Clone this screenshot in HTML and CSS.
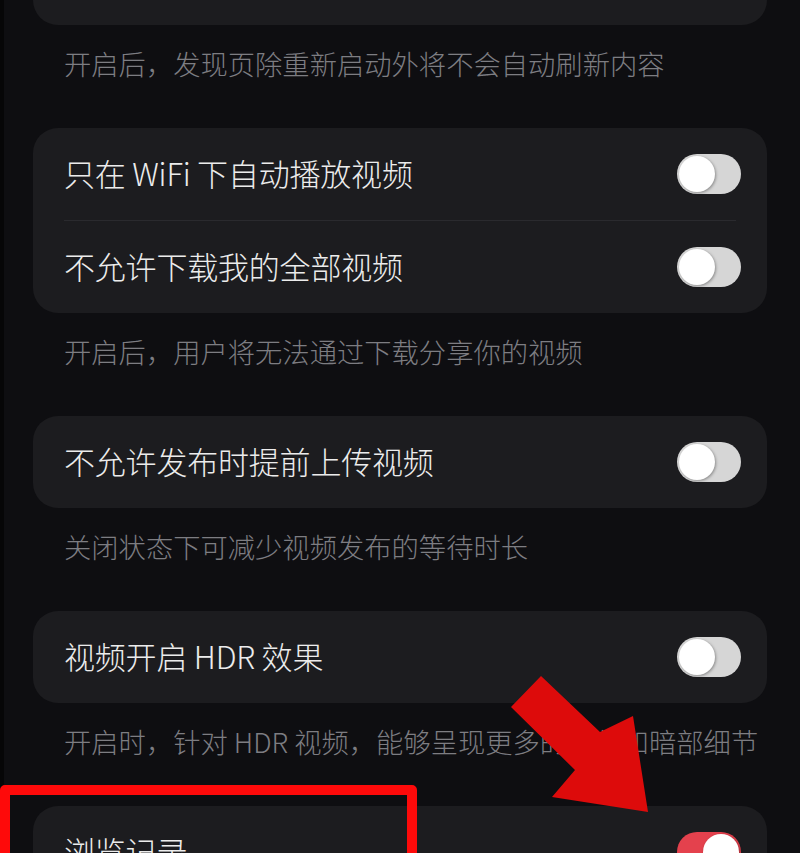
FILE: index.html
```html
<!DOCTYPE html>
<html lang="zh-CN">

<head>
    <meta charset="UTF-8">
    <meta name="viewport" content="width=device-width, initial-scale=1.0">
    <title>通用设置</title>
    <link rel="stylesheet" href="styles.css">
</head>

<body>
    <div class="page">
        <div class="card cut"></div>
        <p class="caption">开启后，发现页除重新启动外将不会自动刷新内容</p>

        <div class="card">
            <div class="row">
                <span class="label">只在 WiFi 下自动播放视频</span>
                <span class="toggle"></span>
            </div>
            <div class="row">
                <span class="label">不允许下载我的全部视频</span>
                <span class="toggle"></span>
            </div>
        </div>
        <p class="caption">开启后，用户将无法通过下载分享你的视频</p>

        <div class="card">
            <div class="row">
                <span class="label">不允许发布时提前上传视频</span>
                <span class="toggle"></span>
            </div>
        </div>
        <p class="caption">关闭状态下可减少视频发布的等待时长</p>

        <div class="card">
            <div class="row">
                <span class="label">视频开启 HDR 效果</span>
                <span class="toggle"></span>
            </div>
        </div>
        <p class="caption">开启时，针对 HDR 视频，能够呈现更多的亮部和暗部细节</p>

        <div class="card">
            <div class="row">
                <span class="label">浏览记录</span>
                <span class="toggle on"></span>
            </div>
        </div>
    </div>

    <!-- annotation overlay -->
    <div class="mark-box"></div>
    <svg class="mark-arrow" viewBox="0 0 800 853" width="800" height="853">
        <polygon points="541,676 600,732 633,716 648,812 552,797 575,770 511,707" fill="#dd0b0b" />
    </svg>
</body>
</html>
```

FILE: styles.css
```css
* {
    margin: 0;
    padding: 0;
    box-sizing: border-box;
}

body {
    background-color: #0e0e11;
    font-family: "Noto Sans CJK SC", "Noto Sans", sans-serif;
    font-weight: 300;
    height: 853px;
    overflow: hidden;
    position: relative;
}

.page {
    width: 800px;
    border-left: 4px solid #060607;
}

.card {
    background-color: #1c1c1f;
    border-radius: 25px;
    margin: 0 33px 0 29px;
}

.card.cut {
    height: 25px;
    border-radius: 0 0 25px 25px;
}

.row {
    height: 92px;
    margin: 0 26px 0 31px;
    display: flex;
    align-items: center;
    justify-content: space-between;
}

.row + .row {
    border-top: 1px solid #2a2a2e;
    height: 93px;
    margin-right: 31px;
}

.row + .row .toggle {
    margin-right: -5px;
}

.label {
    color: #ececec;
    font-size: 31px;
    line-height: 40px;
    letter-spacing: -0.2px;
    padding-bottom: 3px;
}

.caption {
    color: #7d7d82;
    font-size: 27.3px;
    line-height: 28px;
    height: 103px;
    padding: 24px 0 0 60px;
    white-space: nowrap;
}

.toggle {
    width: 64px;
    height: 40px;
    border-radius: 20px;
    background-color: #d6d6d6;
    position: relative;
    flex-shrink: 0;
}

.toggle:after {
    content: '';
    position: absolute;
    top: 2px;
    left: 2px;
    width: 36px;
    height: 36px;
    border-radius: 50%;
    background-color: #fff;
    box-shadow: 1px 1px 3px rgba(0, 0, 0, 0.35);
}

.toggle.on {
    background-color: #e4414d;
}

.toggle.on:after {
    left: 26px;
}

.mark-box {
    position: absolute;
    left: 0;
    top: 785px;
    width: 417px;
    height: 120px;
    border: 10px solid #fe0a0a;
    border-radius: 5px;
}

.mark-arrow {
    position: absolute;
    left: 0;
    top: 0;
    pointer-events: none;
}
```
